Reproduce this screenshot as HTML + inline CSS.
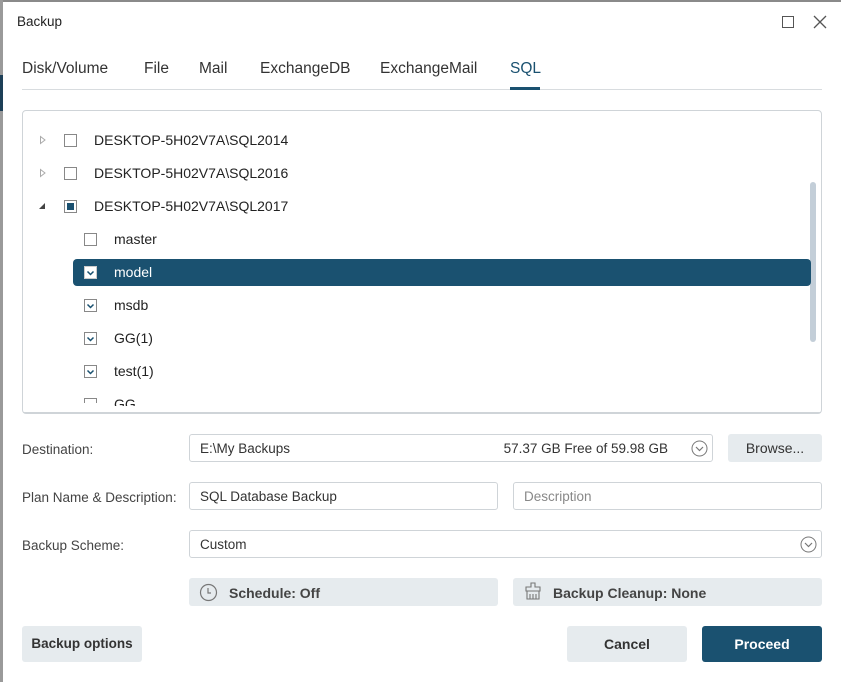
<!DOCTYPE html>
<html><head><meta charset="utf-8"><style>
*{box-sizing:border-box;margin:0;padding:0}
body{width:841px;height:682px;background:#fff;font-family:"Liberation Sans",sans-serif;color:#222;position:relative;overflow:hidden;font-size:14px}
.a{position:absolute}
.frameL{left:0;top:0;width:3px;height:682px;background:#9a9a9a}
.frameT{left:0;top:0;width:841px;height:2px;background:#8a8a8a}
.tab{top:60px;font-size:15.5px;color:#333}
.inp{border:1px solid #cfd4d8;border-radius:3px;background:#fff;height:28px;line-height:28px;padding-left:10px;font-size:13.5px;color:#333}
.btn{background:#e6ebee;border-radius:3px;text-align:center;font-size:14px;color:#333}
.lbl{font-size:13.5px;color:#444}
.cb{width:13px;height:13px;border:1px solid #888;background:#fff}
.row{font-size:14px;color:#222}
</style></head><body>
<div class="a frameT"></div>
<div class="a frameL"></div>
<div class="a" style="left:0;top:75px;width:3px;height:36px;background:#1d3f57"></div>
<div class="a" style="left:17px;top:14px;font-size:13.5px;color:#222">Backup</div>
<div class="a" style="left:782px;top:16px;width:12px;height:12px;border:1.3px solid #555"></div>
<svg class="a" style="left:813px;top:15px" width="14" height="14"><path d="M1 1L13 13M13 1L1 13" stroke="#555" stroke-width="1.3"/></svg>

<div class="a tab" style="left:22px">Disk/Volume</div>
<div class="a tab" style="left:144px">File</div>
<div class="a tab" style="left:199px">Mail</div>
<div class="a tab" style="left:260px">ExchangeDB</div>
<div class="a tab" style="left:380px">ExchangeMail</div>
<div class="a tab" style="left:510px;color:#1a5170">SQL</div>
<div class="a" style="left:22px;top:89px;width:800px;height:1px;background:#d8dcdf"></div>
<div class="a" style="left:510px;top:87px;width:30px;height:3px;background:#1a5170"></div>

<div class="a" style="left:22px;top:110px;width:800px;height:304px;border:1px solid #cfd4d8;border-radius:4px;overflow:hidden"></div>
<div class="a" style="left:810px;top:182px;width:6px;height:160px;background:#c3ced8;border-radius:3px"></div>
<div class="a" style="left:73px;top:259px;width:738px;height:27px;background:#1a5170;border-radius:4px"></div>

<svg class="a" style="left:39px;top:135px" width="8" height="10"><path d="M1.5 1.5L6 5L1.5 8.5Z" fill="none" stroke="#aaa"/></svg>
<svg class="a" style="left:39px;top:168px" width="8" height="10"><path d="M1.5 1.5L6 5L1.5 8.5Z" fill="none" stroke="#aaa"/></svg>
<svg class="a" style="left:38px;top:201px" width="8" height="10"><path d="M1 8L7 8L7 2Z" fill="#444"/></svg>
<div class="a cb" style="left:64px;top:134px"></div>
<div class="a cb" style="left:64px;top:167px"></div>
<div class="a cb" style="left:64px;top:200px"><div style="margin:2px;width:7px;height:7px;background:#1a5170"></div></div>
<div class="a row" style="left:94px;top:132px">DESKTOP-5H02V7A\SQL2014</div>
<div class="a row" style="left:94px;top:165px">DESKTOP-5H02V7A\SQL2016</div>
<div class="a row" style="left:94px;top:198px">DESKTOP-5H02V7A\SQL2017</div>

<div class="a cb" style="left:84px;top:233px"></div>
<div class="a row" style="left:114px;top:231px">master</div>
<svg class="a" style="left:84px;top:266px" width="13" height="13"><rect x=".5" y=".5" width="12" height="12" fill="#fff" stroke="#ccc"/><path d="M3.5 5.5L6.5 8.5L9.5 5.5" fill="none" stroke="#1a5170" stroke-width="1.5"/></svg>
<div class="a row" style="left:114px;top:264px;color:#fff">model</div>
<svg class="a" style="left:84px;top:299px" width="13" height="13"><rect x=".5" y=".5" width="12" height="12" fill="#fff" stroke="#888"/><path d="M3.5 5.5L6.5 8.5L9.5 5.5" fill="none" stroke="#1a5170" stroke-width="1.5"/></svg>
<div class="a row" style="left:114px;top:297px">msdb</div>
<svg class="a" style="left:84px;top:332px" width="13" height="13"><rect x=".5" y=".5" width="12" height="12" fill="#fff" stroke="#888"/><path d="M3.5 5.5L6.5 8.5L9.5 5.5" fill="none" stroke="#1a5170" stroke-width="1.5"/></svg>
<div class="a row" style="left:114px;top:330px">GG(1)</div>
<svg class="a" style="left:84px;top:365px" width="13" height="13"><rect x=".5" y=".5" width="12" height="12" fill="#fff" stroke="#888"/><path d="M3.5 5.5L6.5 8.5L9.5 5.5" fill="none" stroke="#1a5170" stroke-width="1.5"/></svg>
<div class="a row" style="left:114px;top:363px">test(1)</div>
<div class="a" style="left:84px;top:398px;width:13px;height:5px;overflow:hidden"><div class="cb"></div></div>
<div class="a" style="left:114px;top:396px;width:40px;height:10px;overflow:hidden"><span class="row">GG</span></div>
<div class="a" style="left:23px;top:412px;width:798px;height:1px;background:#cfd4d8"></div>

<div class="a lbl" style="left:22px;top:442px">Destination:</div>
<div class="a inp" style="left:189px;top:434px;width:524px">E:\My Backups<span style="position:absolute;right:44px">57.37 GB Free of 59.98 GB</span></div>
<svg class="a" style="left:691px;top:440px" width="17" height="17"><circle cx="8.5" cy="8.5" r="7.5" fill="none" stroke="#777"/><path d="M5 7L8.5 10.5L12 7" fill="none" stroke="#777" stroke-width="1.2"/></svg>
<div class="a btn" style="left:728px;top:434px;width:94px;height:28px;line-height:28px">Browse...</div>

<div class="a lbl" style="left:22px;top:490px">Plan Name &amp; Description:</div>
<div class="a inp" style="left:189px;top:482px;width:309px">SQL Database Backup</div>
<div class="a inp" style="left:513px;top:482px;width:309px;color:#888">Description</div>

<div class="a lbl" style="left:22px;top:538px">Backup Scheme:</div>
<div class="a inp" style="left:189px;top:530px;width:633px">Custom</div>
<svg class="a" style="left:800px;top:536px" width="17" height="17"><circle cx="8.5" cy="8.5" r="7.5" fill="none" stroke="#777"/><path d="M5 7L8.5 10.5L12 7" fill="none" stroke="#777" stroke-width="1.2"/></svg>

<div class="a btn" style="left:189px;top:578px;width:309px;height:28px"></div>
<svg class="a" style="left:199px;top:583px" width="19" height="19"><circle cx="9.5" cy="9.5" r="8" fill="none" stroke="#777" stroke-width="1.2"/><path d="M9 5V10H12" fill="none" stroke="#777" stroke-width="1.2"/></svg>
<div class="a" style="left:229px;top:585px;font-size:14px;font-weight:bold;color:#444">Schedule: Off</div>
<div class="a btn" style="left:513px;top:578px;width:309px;height:28px"></div>
<svg class="a" style="left:524px;top:582px" width="18" height="19"><path d="M7 1H11V5H16V9H2V5H7Z M3 9V17H15V9 M6 12V17 M9 12V17 M12 12V17" fill="none" stroke="#777" stroke-width="1.1"/></svg>
<div class="a" style="left:553px;top:585px;font-size:14px;font-weight:bold;color:#444">Backup Cleanup: None</div>

<div class="a btn" style="left:22px;top:626px;width:120px;height:36px;line-height:36px;font-weight:bold;font-size:13.5px">Backup options</div>
<div class="a btn" style="left:567px;top:626px;width:120px;height:36px;line-height:36px;font-weight:bold">Cancel</div>
<div class="a btn" style="left:702px;top:626px;width:120px;height:36px;line-height:36px;font-weight:bold;background:#1a5170;color:#fff">Proceed</div>
</body></html>
